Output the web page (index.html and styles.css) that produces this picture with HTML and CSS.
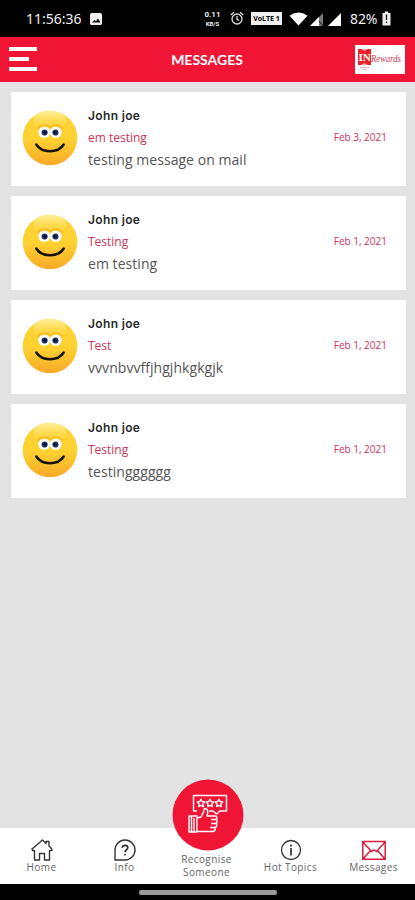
FILE: index.html
```html
<!DOCTYPE html>
<html lang="en">
<head>
<meta charset="UTF-8">
<meta name="viewport" content="width=device-width, initial-scale=1.0">
<title>Messages</title>
<link rel="stylesheet" href="styles.css">
</head>
<body>
  <!-- shared avatar -->
  <svg class="defs" width="0" height="0">
    <defs>
      <linearGradient id="face" x1="0" y1="0" x2="0" y2="1">
        <stop offset="0" stop-color="#fbd02e"/>
        <stop offset="0.5" stop-color="#fdd333"/>
        <stop offset="1" stop-color="#f9a926"/>
      </linearGradient>
      <linearGradient id="shine" x1="0" y1="0" x2="0" y2="1">
        <stop offset="0" stop-color="#fff0a0"/>
        <stop offset="1" stop-color="#fdda45" stop-opacity="0.1"/>
      </linearGradient>
      <symbol id="smiley" viewBox="0 0 56 56">
        <circle cx="28" cy="28" r="27.3" fill="url(#face)"/>
        <ellipse cx="28" cy="10.500" rx="17" ry="9.500" fill="url(#shine)"/>
        <path d="M16 19C17 14.500 25 14 28 17.500C31 14 38.500 14.500 40 19" fill="none" stroke="#f6b922" stroke-width="1.500"/>
        <ellipse cx="22.300" cy="22.300" rx="6" ry="5.600" fill="#fff"/>
        <ellipse cx="33.700" cy="22.300" rx="6" ry="5.600" fill="#fff"/>
        <circle cx="22.600" cy="22.500" r="3.100" fill="#2b4180"/>
        <circle cx="33.500" cy="22.500" r="3.100" fill="#2b4180"/>
        <circle cx="22.800" cy="22.500" r="2" fill="#0b1638"/>
        <circle cx="33.300" cy="22.500" r="2" fill="#0b1638"/>
        <path d="M14.300 34.500C20 43.500 36 43.500 41.700 34.500" fill="none" stroke="#18130b" stroke-width="2.500" stroke-linecap="round"/>
      </symbol>
    </defs>
  </svg>

  <div class="status-bar">
    <span class="time">11:56:36</span>
    <svg class="photo" width="12" height="12" viewBox="0 0 12 12"><rect width="12" height="12" rx="1.500" fill="#eee"/><path d="M2 9.500L4.500 7L6 8.200L8 5.500L10.500 9.500Z" fill="#111"/></svg>
    <span class="speed"><b>0.11</b><b>KB/S</b></span>
    <svg class="alarm" width="14" height="15" viewBox="0 0 14 15" fill="none" stroke="#ddd" stroke-width="1.300"><circle cx="7" cy="8" r="5"/><path d="M7 5V8.300L9 9.500M0.800 4L4 1.200M10 1.200L13.200 4"/></svg>
    <span class="volte">VoLTE 1</span>
    <svg class="wifi" width="19" height="14" viewBox="0 0 19 14"><path d="M0.500 3.800Q9.500 -2.800 18.500 3.800L9.500 13.500Z" fill="#fff"/></svg>
    <svg class="signal" width="14" height="14" viewBox="0 0 14 14"><path d="M0 14L13 1V14Z" fill="#777"/><path d="M0 14L9 5V14Z" fill="#fff"/><path d="M9 9L13 14" stroke="#111"/></svg>
    <svg class="signal2" width="14" height="14" viewBox="0 0 14 14"><path d="M0 14L13 1V14Z" fill="#fff"/></svg>
    <span class="percent">82%</span>
    <svg class="battery" width="9" height="15" viewBox="0 0 9 15"><path d="M0.500 2H2.800V0.500H6.200V2H8.500V14.500H0.500Z" fill="#eee"/><path d="M4.500 3.500V9M4.500 10.500V12" stroke="#111" stroke-width="1.300"/></svg>
  </div>

  <header class="header">
    <div class="menu"><span></span><span class="short"></span><span></span></div>
    <h1>MESSAGES</h1>
    <svg class="brand" width="50" height="29" viewBox="0 0 50 29">
      <rect width="50" height="29" fill="#fff"/>
      <path d="M3 4H16V20H3Z" fill="#e8212b"/>
      <path d="M6 4L9.500 6L13 4M6 20L9.500 18L13 20" fill="#fff" fill-opacity="0.600"/>
      <text x="3.500" y="16" class="brand-in">IN</text>
      <text x="16" y="17" class="brand-name" textLength="30" lengthAdjust="spacingAndGlyphs">Rewards</text>
      <path d="M5 22.500H14M7 24.500H12" stroke="#e8a0a8" stroke-width="0.800"/>
    </svg>
  </header>

  <main class="messages">
    <article class="card">
      <svg class="avatar"><use href="#smiley"/></svg>
      <div class="content">
        <h2>John joe</h2>
        <p class="subject">em testing</p>
        <p class="text">testing message on mail</p>
      </div>
      <time>Feb 3, 2021</time>
    </article>
    <article class="card">
      <svg class="avatar"><use href="#smiley"/></svg>
      <div class="content">
        <h2>John joe</h2>
        <p class="subject">Testing</p>
        <p class="text">em testing</p>
      </div>
      <time>Feb 1, 2021</time>
    </article>
    <article class="card">
      <svg class="avatar"><use href="#smiley"/></svg>
      <div class="content">
        <h2>John joe</h2>
        <p class="subject">Test</p>
        <p class="text">vvvnbvvffjhgjhkgkgjk</p>
      </div>
      <time>Feb 1, 2021</time>
    </article>
    <article class="card">
      <svg class="avatar"><use href="#smiley"/></svg>
      <div class="content">
        <h2>John joe</h2>
        <p class="subject">Testing</p>
        <p class="text">testingggggg</p>
      </div>
      <time>Feb 1, 2021</time>
    </article>
  </main>

  <nav class="tabs">
    <a class="tab">
      <svg width="24" height="24" viewBox="0 0 24 24" fill="none" stroke="#333" stroke-width="1.400" stroke-linejoin="round"><path d="M4.500 12.500V22H9.500V15.500H14.500V22H19.500V12.500L22 12.500L21.500 10.500L19 8V3.500H16V5.500L12.500 2L2 11L2.500 12.500Z"/></svg>
      <span>Home</span>
    </a>
    <a class="tab">
      <svg width="24" height="24" viewBox="0 0 24 24" fill="none" stroke="#333" stroke-width="1.400"><path d="M2 22V12A10 10 0 1 1 12 22Z" stroke-linejoin="round"/><path d="M9.300 9.800C9.300 6.500 14.800 6.700 14.800 9.800C14.800 11.800 12 11.700 12 14.300M12 16V17.600" stroke-width="1.700"/></svg>
      <span>Info</span>
    </a>
    <a class="tab recognise">
      <svg class="bubble" width="72" height="72" viewBox="0 0 72 72" fill="none" stroke="#fff" stroke-width="1.400" stroke-linejoin="round">
        <circle cx="36" cy="36" r="35.500" fill="#f01535" stroke="none"/>
        <path d="M25 32H21.500V16.500H54.500V32H48L44.500 35L41 32H37"/>
        <path id="star" d="M29 20.300L30.200 22.500L32.700 23L31 24.900L31.300 27.500L29 26.400L26.700 27.500L27 24.900L25.300 23L27.800 22.500Z"/>
        <use href="#star" x="9"/>
        <use href="#star" x="18"/>
        <path d="M17 37H25V53H17ZM19.500 37V53M22 39V53"/>
        <path d="M25 39L29 38L31.500 33L32.500 29.500C36 29.500 36.500 32 35 37H43C45.500 37 45.500 40.500 43 40.500H39M43 40.500C46 40.500 46 44.500 43 44.500H39M43 44.500C45.500 44.500 45.500 48.500 42 48.500H38M42 48.500C44 48.500 43.500 52.500 41 52.500H25"/>
      </svg>
      <span>Recognise<br>Someone</span>
    </a>
    <a class="tab">
      <svg width="24" height="24" viewBox="0 0 24 24" fill="none" stroke="#333" stroke-width="1.300"><circle cx="12" cy="12" r="9.500"/><path d="M12 10V17.500M12 6.500V8.500" stroke-width="1.700"/></svg>
      <span>Hot Topics</span>
    </a>
    <a class="tab">
      <svg width="26" height="24" viewBox="0 0 26 24" fill="none" stroke="#d51f3d" stroke-width="1.500"><path d="M1.800 3.500H24.200V21.200H1.800ZM2 4L10.500 13.500L13 11.800L15.500 13.500L24 4M2 21L9.500 12.500M24 21L16.500 12.500"/></svg>
      <span>Messages</span>
    </a>
  </nav>
  <div class="gesture-bar"><span></span></div>
</body>
</html>
```
FILE: styles.css
```css
* {
  box-sizing: border-box;
}
body {
  margin: 0;
  height: 900px;
  display: flex;
  flex-direction: column;
  overflow: hidden;
  background-color: #e3e3e3;
  font-family: "Open Sans", "Noto Sans", sans-serif;
}
.defs {
  position: absolute;
}
.status-bar {
  height: 37px;
  flex: none;
  display: flex;
  align-items: center;
  padding-left: 26px;
  background-color: #000;
  color: #eee;
}
.time {
  width: 64px;
  font: 14px "Noto Sans", sans-serif;
}
.speed {
  width: 19px;
  margin-left: 101px;
  display: flex;
  flex-direction: column;
  align-items: center;
  gap: 1px;
  font: 8px/8px Roboto, sans-serif;
}
.speed b + b {
  font-size: 6px;
  line-height: 7px;
}
.alarm {
  margin-left: 8px;
}
.volte {
  width: 31px;
  height: 13px;
  margin-left: 7px;
  background-color: #eee;
  color: #000;
  font: bold 7px/13px "Noto Sans", sans-serif;
  text-align: center;
}
.wifi {
  margin-left: 7px;
}
.signal {
  margin-left: 2px;
}
.signal2 {
  margin-left: 4px;
}
.percent {
  width: 29px;
  margin-left: 8px;
  font: 14px "Noto Sans", sans-serif;
  letter-spacing: -0.1px;
}
.battery {
  margin-left: 3px;
}
.header {
  height: 44.5px;
  flex: none;
  display: flex;
  align-items: center;
  justify-content: space-between;
  padding: 0 10px 0 9px;
  background-color: #f01535;
}
.menu {
  width: 50px;
  display: flex;
  flex-direction: column;
  gap: 6px;
}
.menu span {
  width: 28px;
  height: 4px;
  background-color: #fff;
}
.menu .short {
  width: 20px;
}
.header h1 {
  margin: 0;
  color: #fff;
  font: bold 14px Lato, sans-serif;
  letter-spacing: 0;
}
.brand-in {
  fill: #fff;
  font: bold 11px "Liberation Serif", serif;
}
.brand-name {
  fill: #c93b50;
  font: italic 10px "Liberation Serif", serif;
}
.messages {
  flex: 1;
  display: flex;
  flex-direction: column;
  gap: 10px;
  padding: 10.5px 9px 0 10.5px;
}
.card {
  height: 94px;
  display: flex;
  align-items: flex-start;
  padding: 0 19px 0 11.5px;
  background-color: #fff;
}
.avatar {
  width: 56px;
  height: 56px;
  margin-top: 18px;
}
.content {
  flex: 1;
  padding: 13px 0 0 10px;
}
.content h2,
.content p {
  margin: 0;
  height: 22px;
  line-height: 22px;
  white-space: nowrap;
}
.content h2 {
  color: #2a2a2a;
  font-family: Inter, sans-serif;
  font-size: 12px;
  font-weight: 600;
  letter-spacing: 0.35px;
}
.content .subject {
  color: #c8355a;
  font-size: 12px;
}
.content .text {
  color: #555;
  font-size: 14px;
  letter-spacing: 0.05px;
}
.card time {
  margin-top: 38px;
  color: #c8355a;
  font-size: 10px;
  line-height: 14px;
}
.tabs {
  height: 56.5px;
  flex: none;
  display: flex;
  background-color: #fff;
}
.tab {
  flex: 1;
  display: flex;
  flex-direction: column;
  align-items: center;
  padding-top: 10px;
  color: #666;
  font-size: 10px;
  line-height: 11px;
  letter-spacing: 0.4px;
  text-align: center;
}
.recognise {
  padding-top: 0;
  line-height: 13.5px;
}
.bubble {
  flex: none;
  margin-top: -49px;
  margin-bottom: 2px;
}
.recognise span {
  padding-right: 2px;
}
.gesture-bar {
  height: 16px;
  flex: none;
  display: flex;
  justify-content: center;
  padding-top: 6px;
  background-color: #000;
}
.gesture-bar span {
  width: 138px;
  height: 5px;
  border-radius: 2px;
  background-color: #999;
}
```
